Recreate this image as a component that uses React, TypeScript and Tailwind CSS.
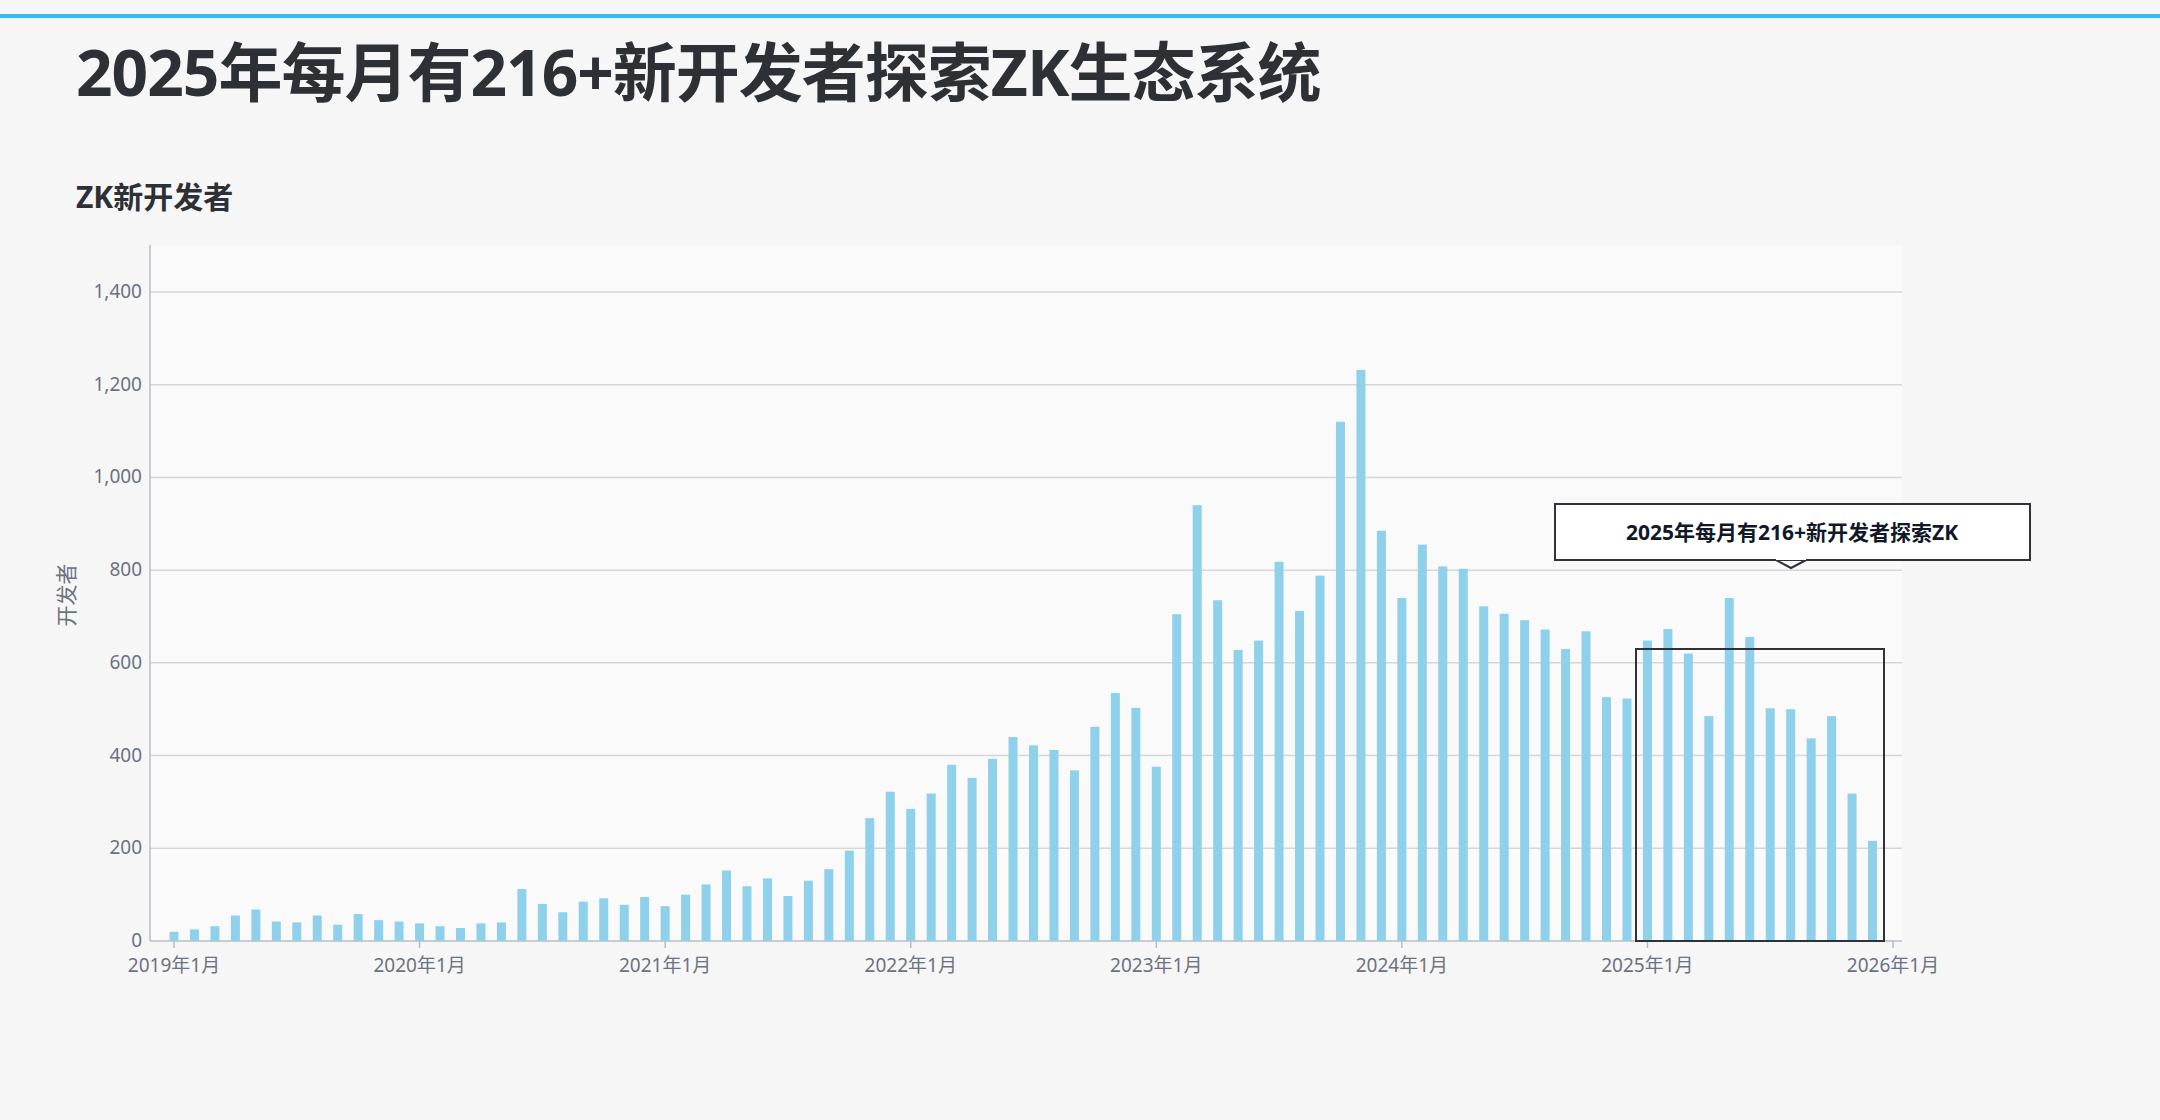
import React from 'react';

const data = [
  20, 25, 32, 55, 68, 42, 40, 55, 35, 58, 45, 42,
  38, 32, 28, 38, 40, 112, 80, 62, 85, 92, 78, 95,
  75, 100, 122, 152, 118, 135, 97, 130, 155, 195, 265, 322,
  285, 318, 380, 352, 393, 440, 422, 412, 368, 462, 535, 503,
  376, 705, 940, 735, 628, 648, 818, 712, 788, 1120, 1232, 885,
  740, 855, 808, 803, 722, 706, 692, 672, 630, 668, 526, 523,
  648, 673, 620, 485, 740, 656, 502, 500, 437, 485, 318, 216,
];

const X0 = 174;
const STEP = (1893 - 174) / 84;
const Y0 = 941;
const PER = (941 - 292) / 1400;
const FONT = '"Noto Sans", "Noto Sans CJK SC", sans-serif';

function Chart() {
  const ticks = [0, 200, 400, 600, 800, 1000, 1200, 1400];
  const years = [2019, 2020, 2021, 2022, 2023, 2024, 2025, 2026];
  return (
    <svg width={2160} height={800} className="block">
      <g transform="translate(0,-212)" fontFamily={FONT}>
        <rect x={150} y={245} width={1752} height={696} fill="#fafafa" />
        {ticks.map((t) => (
          <g key={t}>
            {t > 0 && <line x1={150} x2={1902} y1={Y0 - t * PER} y2={Y0 - t * PER} stroke="#d6d6d6" strokeWidth={1.5} />}
            <text x={142} y={Y0 - t * PER + 6} textAnchor="end" fontSize={19} fill="#6b7280">
              {t.toLocaleString('en-US')}
            </text>
          </g>
        ))}
        <line x1={150} x2={150} y1={245} y2={941} stroke="#b8bcc4" strokeWidth={1.5} />
        <line x1={150} x2={1902} y1={941} y2={941} stroke="#b8bcc4" strokeWidth={1.5} />
        <text transform="translate(74,595) rotate(-90)" textAnchor="middle" fontSize={21} fill="#6b7280">开发者</text>
        {data.map((v, i) => (
          <rect key={i} x={X0 + i * STEP - 4.5} y={Y0 - v * PER} width={9} height={v * PER} fill="#8fd0ea" />
        ))}
        {years.map((y, i) => (
          <g key={y}>
            <line x1={X0 + i * 12 * STEP} x2={X0 + i * 12 * STEP} y1={941} y2={948} stroke="#b8bcc4" strokeWidth={1.5} />
            <text x={X0 + i * 12 * STEP} y={972} textAnchor="middle" fontSize={19} fill="#6b7280">{y}年1月</text>
          </g>
        ))}
        <rect x={1636} y={649} width={248} height={292} fill="none" stroke="#2f3337" strokeWidth={2} />
        <path d="M1774 559 L1791 568 L1808 559" fill="#ffffff" stroke="#2f3337" strokeWidth={2} />
        <rect x={1555} y={504} width={475} height={56} fill="#ffffff" stroke="#2f3337" strokeWidth={2} />
        <rect x={1776} y={557} width={30} height={3} fill="#ffffff" />
        <text x={1792} y={534} textAnchor="middle" dominantBaseline="middle" fontSize={21} fontWeight={700} fill="#111827">
          2025年每月有216+新开发者探索ZK
        </text>
      </g>
    </svg>
  );
}

export default function App() {
  return (
    <div className="w-[2160px] h-[1120px] bg-[#f6f6f6] overflow-hidden" style={{ fontFamily: FONT }}>
      <div className="h-[14px]" />
      <div className="h-[4px] bg-[#30bdf0]" />
      <div className="h-[108px] flex items-center pl-[76px]">
        <h1 className="text-[64px] font-bold text-[#2d3035] leading-none tracking-[-1px]">
          2025年每月有216+新开发者探索ZK生态系统
        </h1>
      </div>
      <div className="mt-[56px] pl-[76px] text-[30px] leading-[30px] font-bold text-[#2d3035]">ZK新开发者</div>
      <Chart />
    </div>
  );
}
